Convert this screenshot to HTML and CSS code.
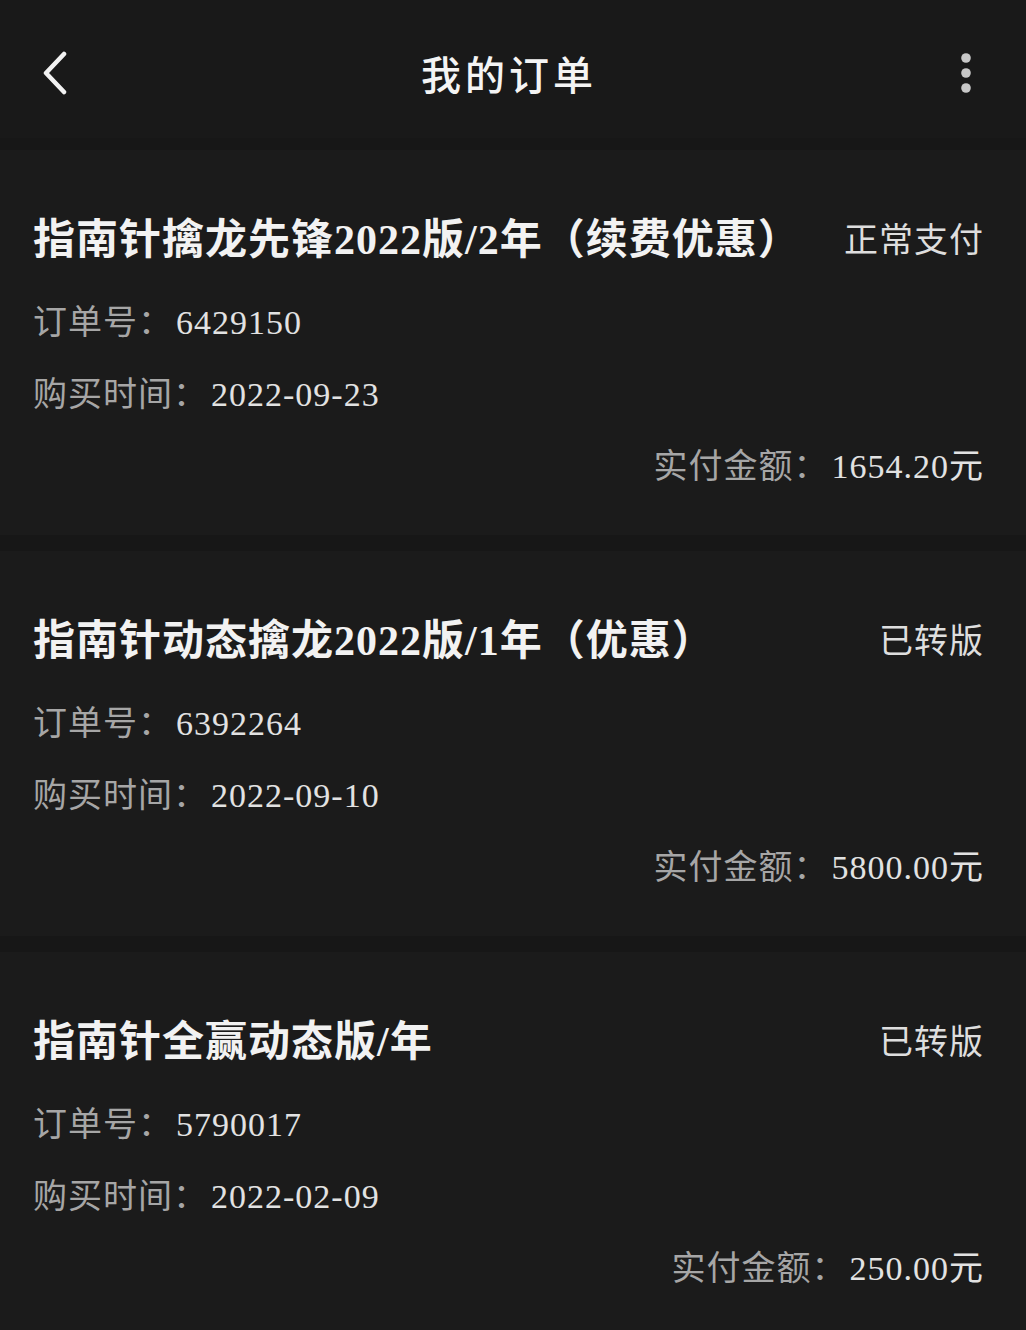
FILE: index.html
```html
<!DOCTYPE html>
<html lang="zh-CN">
<head>
<meta charset="utf-8">
<title>我的订单</title>
<link rel="stylesheet" href="styles.css">
</head>
<body>
<div class="page">
  <header class="topbar">
    <svg class="back" width="30" height="44" viewBox="0 0 30 44"><path d="M24 3 L6 22 L24 41" fill="none" stroke="#f2f2f2" stroke-width="4.5" stroke-linecap="round" stroke-linejoin="round"/></svg>
    <h1 class="page-title">我的订单</h1>
    <svg class="more" width="12" height="42" viewBox="0 0 12 42"><circle cx="6" cy="6" r="4.8" fill="#c8c8c8"/><circle cx="6" cy="21" r="4.8" fill="#c8c8c8"/><circle cx="6" cy="36" r="4.8" fill="#c8c8c8"/></svg>
  </header>
  <main class="orders">
    <section class="card">
      <div class="card-head">
        <h2 class="product">指南针擒龙先锋2022版/2年（续费优惠）</h2>
        <span class="status">正常支付</span>
      </div>
      <p class="meta first"><span class="label">订单号：</span><span class="val">6429150</span></p>
      <p class="meta"><span class="label">购买时间：</span><span class="val">2022-09-23</span></p>
      <p class="amount"><span class="label">实付金额：</span><span class="val">1654.20元</span></p>
    </section>
    <section class="card">
      <div class="card-head">
        <h2 class="product">指南针动态擒龙2022版/1年（优惠）</h2>
        <span class="status">已转版</span>
      </div>
      <p class="meta first"><span class="label">订单号：</span><span class="val">6392264</span></p>
      <p class="meta"><span class="label">购买时间：</span><span class="val">2022-09-10</span></p>
      <p class="amount"><span class="label">实付金额：</span><span class="val">5800.00元</span></p>
    </section>
    <section class="card">
      <div class="card-head">
        <h2 class="product">指南针全赢动态版/年</h2>
        <span class="status">已转版</span>
      </div>
      <p class="meta first"><span class="label">订单号：</span><span class="val">5790017</span></p>
      <p class="meta"><span class="label">购买时间：</span><span class="val">2022-02-09</span></p>
      <p class="amount"><span class="label">实付金额：</span><span class="val">250.00元</span></p>
    </section>
  </main>
</div>
</body>
</html>
```

FILE: styles.css
```css
html, body {
  margin: 0;
  padding: 0;
  background: #171717;
}
body {
  font-family: "Liberation Serif", "Noto Sans CJK SC", serif;
  color: #e6e6e6;
}
.page {
  width: 1026px;
  height: 1330px;
  overflow: hidden;
  background: #171717;
}
.topbar {
  box-sizing: border-box;
  height: 138px;
  padding: 8px 54px 0 40px;
  display: flex;
  align-items: center;
  justify-content: space-between;
  background: #191919;
}
.back {
  display: block;
}
.more {
  display: block;
}
.page-title {
  margin: 0 0 0 -12px;
  font-family: "Noto Sans CJK SC", sans-serif;
  font-weight: 500;
  font-size: 40px;
  letter-spacing: 4px;
  color: #f4f4f4;
  line-height: 44px;
}
.orders {
  display: flex;
  flex-direction: column;
  gap: 16px;
  padding-top: 12px;
}
.card {
  box-sizing: border-box;
  height: 385px;
  padding: 68px 44px 0 33px;
  background: #1b1b1b;
}
.card-head {
  display: flex;
  justify-content: space-between;
  align-items: center;
  height: 44px;
}
.product {
  margin: 0;
  font-family: "Liberation Serif", "Noto Sans CJK SC", serif;
  font-weight: 700;
  font-size: 42px;
  letter-spacing: 1px;
  line-height: 44px;
  color: #f2f2f2;
  white-space: nowrap;
}
.status {
  font-family: "Noto Sans CJK SC", sans-serif;
  font-size: 34px;
  letter-spacing: 1px;
  color: #dedede;
  line-height: 40px;
  margin-top: -4px;
  margin-right: -2px;
}
.meta, .amount {
  margin: 29px 0 0;
  font-size: 34px;
  letter-spacing: 1px;
  line-height: 40px;
  white-space: nowrap;
}
.meta.first {
  margin-top: 38px;
}
.amount {
  margin-top: 29px;
  margin-right: -2px;
  text-align: right;
}
.label {
  font-family: "Noto Sans CJK SC", sans-serif;
  color: #a6a6a6;
  margin-right: 3px;
}
.val {
  font-family: "Liberation Serif", "Noto Sans CJK SC", serif;
  color: #e2e2e2;
}
```
